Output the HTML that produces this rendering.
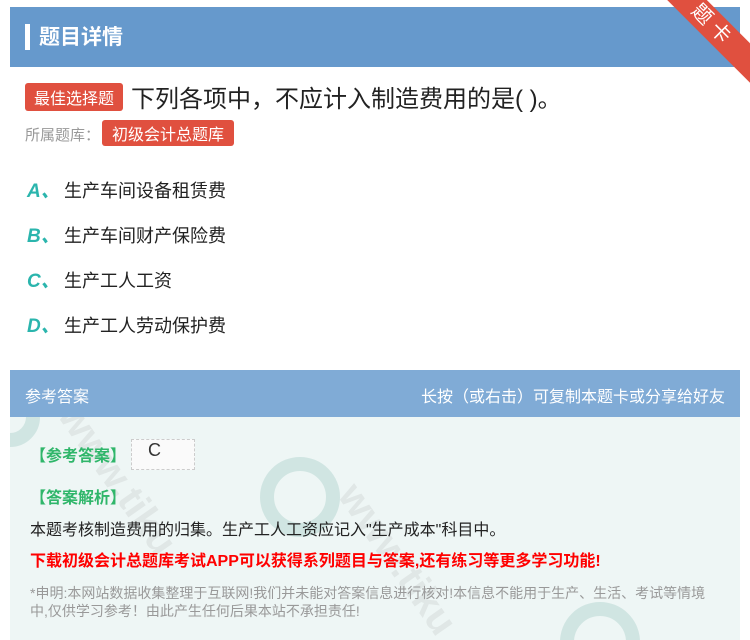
<!DOCTYPE html>
<html><head><meta charset="utf-8">
<style>
*{margin:0;padding:0;box-sizing:border-box}
html,body{width:750px;height:640px;overflow:hidden}
body{background:#fff;font-family:"Liberation Sans","Noto Sans CJK SC",sans-serif;position:relative}
#w{position:absolute;left:0;top:0;width:750px;height:640px;overflow:hidden}
.hdr{position:absolute;left:10px;top:7px;width:730px;height:60px;background:#6699cc}
.hdr .bar{position:absolute;left:15px;top:17px;width:5px;height:26px;background:#fff}
.hdr .t{position:absolute;left:29px;top:14px;color:#fff;font-size:21px;font-weight:bold}
.ribbon{position:absolute;right:-38px;top:12px;width:150px;height:28px;background:#e0503f;transform:rotate(45deg);color:#fff;text-align:center;font-size:20px;line-height:28px;letter-spacing:6px}
.tag{display:inline-block;background:#e0503f;color:#fff;border-radius:3px}
.q{position:absolute;left:25px;top:79px;font-size:24px;color:#222;white-space:nowrap}
.q .tag{font-size:16px;padding:2px 9px;vertical-align:3px;margin-right:8px}
.lib{position:absolute;left:25px;top:120px;font-size:15px;color:#999}
.lib .tag{font-size:16px;padding:1px 10px;margin-left:2px}
.opt{position:absolute;left:27px;font-size:18px;color:#222}
.opt b{color:#2bb5ad;font-style:italic;font-size:19px;display:inline-block;width:37px}
.ah{position:absolute;left:10px;top:370px;width:730px;height:47px;background:#80abd6;color:#fff;font-size:16px}
.ah .l{position:absolute;left:15px;top:13px}
.ah .r{position:absolute;right:15px;top:13px}
.ab{position:absolute;left:10px;top:417px;width:730px;height:223px;background:#eef6f5;overflow:hidden}
.g{color:#2fb66a;font-weight:bold;font-size:16px;position:absolute;left:20px}
.img{position:absolute;left:121px;top:22px;width:64px;height:31px;border:1px dashed #ccc;background:#fafafa;font-size:18px;color:#333;padding-left:16px}
.txt{position:absolute;left:20px;top:99px;font-size:16px;color:#222}
.red{position:absolute;left:20px;top:130px;font-size:16px;color:#f00;font-weight:bold;white-space:nowrap}
.gray{position:absolute;left:20px;top:167px;width:680px;font-size:14px;color:#999;line-height:18px}
.sw{position:absolute;border-radius:50%;border:14px solid rgba(120,180,170,0.25)}
.wm{position:absolute;color:rgba(150,150,150,0.15);font-size:40px;font-weight:bold;transform:rotate(55deg);white-space:nowrap}
</style></head><body><div id="w">
<div class="hdr"><div class="bar"></div><div class="t">题目详情</div></div>
<div class="ribbon">题卡</div>
<div class="q"><span class="tag">最佳选择题</span>下列各项中，不应计入制造费用的是( )。</div>
<div class="lib">所属题库：<span class="tag">初级会计总题库</span></div>
<div class="opt" style="top:176px"><b>A、</b>生产车间设备租赁费</div>
<div class="opt" style="top:221px"><b>B、</b>生产车间财产保险费</div>
<div class="opt" style="top:266px"><b>C、</b>生产工人工资</div>
<div class="opt" style="top:311px"><b>D、</b>生产工人劳动保护费</div>
<div class="ah"><span class="l">参考答案</span><span class="r">长按（或右击）可复制本题卡或分享给好友</span></div>
<div class="ab">
<div class="sw" style="left:250px;top:40px;width:80px;height:80px"></div>
<div class="sw" style="left:550px;top:185px;width:80px;height:80px"></div>
<div class="sw" style="left:-30px;top:-30px;width:60px;height:60px"></div>
<div class="wm" style="left:20px;top:40px">www.tiku</div>
<div class="wm" style="left:300px;top:120px">www.tiku</div>
<div class="g" style="top:25px">【参考答案】</div>
<div class="img">C</div>
<div class="g" style="top:67px">【答案解析】</div>
<div class="txt">本题考核制造费用的归集。生产工人工资应记入"生产成本"科目中。</div>
<div class="red">下载初级会计总题库考试APP可以获得系列题目与答案,还有练习等更多学习功能!</div>
<div class="gray">*申明:本网站数据收集整理于互联网!我们并未能对答案信息进行核对!本信息不能用于生产、生活、考试等情境中,仅供学习参考！由此产生任何后果本站不承担责任!</div>
</div>
</div></body></html>
